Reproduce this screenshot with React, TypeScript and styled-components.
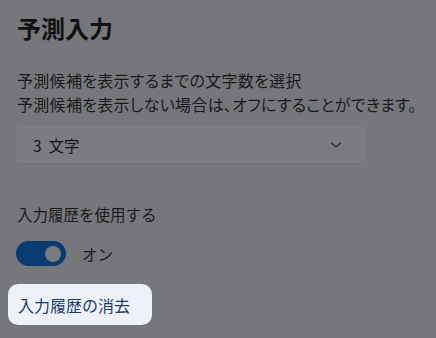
import React from "react";
import styled, { createGlobalStyle } from "styled-components";

const Global = createGlobalStyle`
  html, body { margin: 0; padding: 0; background: #76777b; }
  body { font-family: "Noto Sans CJK JP", "Noto Sans", sans-serif; color: #151515; }
`;

const Page = styled.div`
  width: 436px;
  height: 338px;
  overflow: hidden;
  background: #76777b;
  display: flex;
  flex-direction: column;
  padding: 0 0 0 8px;
  box-sizing: border-box;
`;

const Title = styled.h1`
  margin: 8px 0 0 9px;
  font-size: 24px;
  line-height: 40px;
  font-weight: 700;
  color: #111;
`;

const Desc = styled.p`
  margin: 20px 0 0 9px;
  font-size: 16px;
  line-height: 24px;
  color: #1a1a1a;
  white-space: nowrap;
  font-feature-settings: "palt";
  letter-spacing: 0.3px;
`;

const Select = styled.div`
  margin: 10px 0 0 9px;
  width: 348px;
  height: 38px;
  box-sizing: border-box;
  border: 1px solid #7f8084;
  border-bottom-color: #6c6d71;
  border-radius: 5px;
  background: #7b7c80;
  display: flex;
  align-items: center;
  justify-content: space-between;
  padding: 0 22px 0 15px;
  font-size: 15.5px;
  color: #151515;
`;

const Value = styled.span`
  white-space: pre;
`;

const Label = styled.div`
  margin: 38px 0 0 9px;
  font-size: 15.5px;
  line-height: 24px;
  color: #1a1a1a;
`;

const ToggleRow = styled.div`
  margin: 15px 0 0 8px;
  display: flex;
  align-items: center;
  gap: 16px;
  font-size: 15.5px;
  color: #1a1a1a;
`;

const Track = styled.div`
  width: 50px;
  height: 25px;
  border-radius: 13px;
  background: #073c70;
  position: relative;
`;

const Knob = styled.div`
  position: absolute;
  right: 5px;
  top: 4.5px;
  width: 16px;
  height: 16px;
  border-radius: 50%;
  background: #797a7e;
`;

const Button = styled.div`
  margin: 18px 0 0 0;
  width: 144px;
  height: 41px;
  border-radius: 10px;
  background: #eef1f7;
  display: flex;
  align-items: center;
  padding-left: 10px;
  box-sizing: border-box;
  font-size: 16px;
  color: #1a3c6c;
`;

export default function App() {
  return (
    <Page>
      <Global />
      <Title>予測入力</Title>
      <Desc>
        予測候補を表示するまでの文字数を選択
        <br />
        予測候補を表示しない場合は、オフにすることができます。
      </Desc>
      <Select>
        <Value>3  文字</Value>
        <svg width="12" height="8" viewBox="0 0 12 8">
          <path d="M1.5 2 L6 6 L10.5 2" fill="none" stroke="#2a2a2a" strokeWidth="1.3" strokeLinecap="round" strokeLinejoin="round" />
        </svg>
      </Select>
      <Label>入力履歴を使用する</Label>
      <ToggleRow>
        <Track>
          <Knob />
        </Track>
        <span>オン</span>
      </ToggleRow>
      <Button>入力履歴の消去</Button>
    </Page>
  );
}
